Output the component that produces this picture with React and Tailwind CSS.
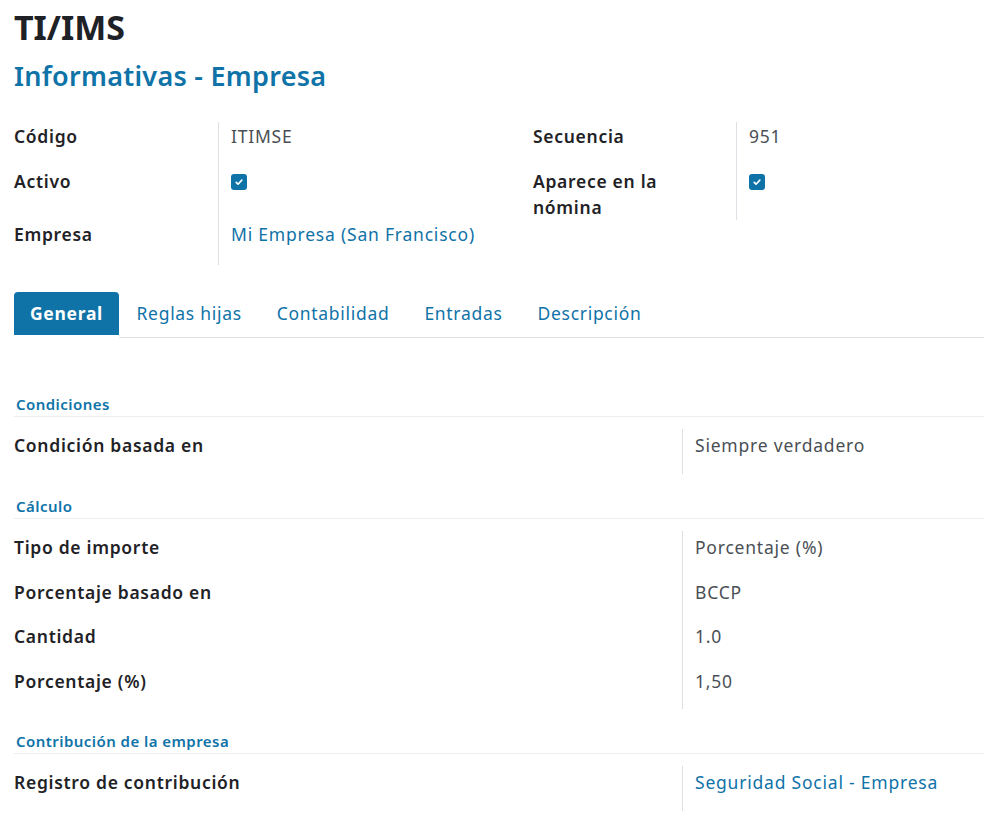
const BLUE = "text-[#0f73a8]";

const Check = () => (
  <span className="mt-[6px] flex h-4 w-4 items-center justify-center rounded-[3px] bg-[#0f73a8]">
    <svg viewBox="0 0 16 16" className="h-[10px] w-[10px]" fill="none" stroke="white" strokeWidth="2.6" strokeLinecap="round" strokeLinejoin="round">
      <path d="M3.5 8.5l3 3 6-6.5" />
    </svg>
  </span>
);

const Label = ({ children, pt = "pt-[1px]" }) => (
  <div className={`${pt} text-[17.5px] font-semibold leading-[26px] tracking-[0.04em] text-[#1f2226]`}>{children}</div>
);

const Value = ({ children, link, h = "h-[45px]", pt = "pt-[1px]" }) => (
  <div className={`border-l border-[#dcdfe3] pl-3 ${pt} text-[17.5px] leading-[26px] tracking-[0.045em] ${h} ${link ? BLUE : "text-[#4a4f55]"}`}>
    {children}
  </div>
);

const Section = ({ title, rows }) => (
  <div>
    <div className={`border-b border-[#eceef0] pb-[1px] pl-[2px] text-[15px] font-semibold leading-[22px] tracking-[0.03em] ${BLUE}`}>{title}</div>
    <div className="mt-3 grid grid-cols-[668px_1fr]">
      {rows.map(([l, v, link]) => (
        <div key={l} className="contents">
          <Label pt="pt-[3px]">{l}</Label>
          <Value pt="pt-[3px]" link={link} h={rows.length > 1 ? "h-[44.5px]" : "h-[45px]"}>{v}</Value>
        </div>
      ))}
    </div>
  </div>
);

export default function App() {
  return (
    <div className="min-h-screen bg-white pl-[14px] pt-[4px] font-['Noto_Sans',sans-serif]">
      <h1 className="text-[34px] font-bold leading-[46px] text-[#1e2125]">TI/IMS</h1>
      <h2 className={`mt-[8px] text-[27px] font-semibold leading-[36px] tracking-[0.01em] ${BLUE}`}>Informativas - Empresa</h2>

      {/* TOP FIELDS */}
      <div className="mt-[28px] grid grid-cols-[204px_315px_203px_1fr] grid-rows-[45px_53px_45px]">
        <Label>Código</Label>
        <Value>ITIMSE</Value>
        <Label>Secuencia</Label>
        <Value>951</Value>

        <Label>Activo</Label>
        <Value h="h-[53px]"><Check /></Value>
        <Label>Aparece en la<br />nómina</Label>
        <Value h="h-[53px]"><Check /></Value>

        <Label>Empresa</Label>
        <Value link>Mi Empresa (San Francisco)</Value>
        <div />
        <div />
      </div>

      {/* TABS */}
      <ul className="mt-[27px] flex border-b border-[#dee2e6] text-[17.5px] tracking-[0.04em]">
        <li className="-mb-px bg-white pb-[3px]">
          <div className="flex h-[43px] items-center rounded-t-[4px] bg-[#0f73a8] px-[16px] font-bold text-white">General</div>
        </li>
        {["Reglas hijas", "Contabilidad", "Entradas", "Descripción"].map((t) => (
          <li key={t} className={`flex h-[43px] items-center px-[17.5px] ${BLUE}`}>{t}</li>
        ))}
      </ul>

      {/* SECTIONS */}
      <div className="mt-[55px] flex flex-col gap-[21px]">
        <Section title="Condiciones" rows={[["Condición basada en", "Siempre verdadero"]]} />
        <Section
          title="Cálculo"
          rows={[
            ["Tipo de importe", "Porcentaje (%)"],
            ["Porcentaje basado en", "BCCP"],
            ["Cantidad", "1.0"],
            ["Porcentaje (%)", "1,50"],
          ]}
        />
        <Section title="Contribución de la empresa" rows={[["Registro de contribución", "Seguridad Social - Empresa", true]]} />
      </div>
    </div>
  );
}
